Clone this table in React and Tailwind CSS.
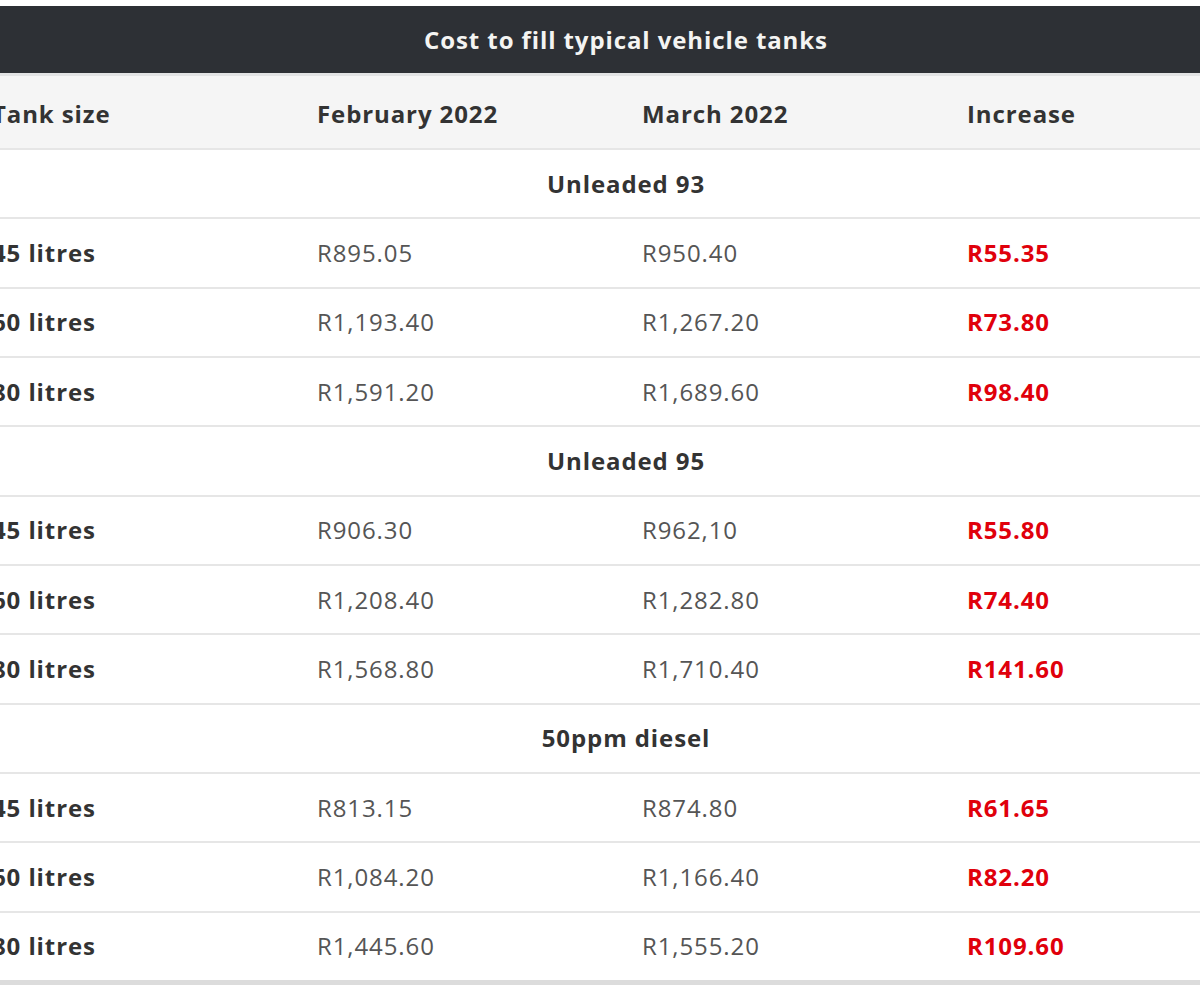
const groups = [
  {
    name: "Unleaded 93",
    rows: [
      ["45 litres", "R895.05", "R950.40", "R55.35"],
      ["60 litres", "R1,193.40", "R1,267.20", "R73.80"],
      ["80 litres", "R1,591.20", "R1,689.60", "R98.40"],
    ],
  },
  {
    name: "Unleaded 95",
    rows: [
      ["45 litres", "R906.30", "R962,10", "R55.80"],
      ["60 litres", "R1,208.40", "R1,282.80", "R74.40"],
      ["80 litres", "R1,568.80", "R1,710.40", "R141.60"],
    ],
  },
  {
    name: "50ppm diesel",
    rows: [
      ["45 litres", "R813.15", "R874.80", "R61.65"],
      ["60 litres", "R1,084.20", "R1,166.40", "R82.20"],
      ["80 litres", "R1,445.60", "R1,555.20", "R109.60"],
    ],
  },
];

const rowClass =
  "grid grid-cols-[325px_325px_325px_325px] items-center h-[69.33px] border-t-2 border-[#e6e6e6]";

const App = () => {
  return (
    <div
      className="w-[1200px] h-[1000px] overflow-hidden bg-white pt-[6px] tracking-[0.9px]"
      style={{ fontFamily: '"Open Sans", "Liberation Sans", sans-serif' }}
    >
      <div className="w-[1300px] -ml-[24px] border-b-[5px] border-[#dcdcdc]">
        {/* title bar */}
        <div className="h-[67px] bg-[#2d3035] flex items-center justify-center text-[#f4f4f2] text-[24px] font-bold">
          Cost to fill typical vehicle tanks
        </div>

        {/* column headings */}
        <div className="grid grid-cols-[325px_325px_325px_325px] items-center h-[75px] pt-[3px] bg-[#f5f5f5] border-t-[3px] border-[#e2e3e4] text-[24px] font-bold text-[#333]">
          <div className="pl-[16px]">Tank size</div>
          <div className="pl-[16px]">February 2022</div>
          <div className="pl-[16px]">March 2022</div>
          <div className="pl-[16px]">Increase</div>
        </div>

        {groups.map((g) => (
          <div key={g.name}>
            <div className={`${rowClass} text-[24px] font-bold text-[#333]`}>
              <div className="col-span-4 text-center">{g.name}</div>
            </div>
            {g.rows.map((r) => (
              <div key={g.name + r[0]} className={`${rowClass} text-[24px]`}>
                <div className="pl-[16px] font-bold text-[#333]">{r[0]}</div>
                <div className="pl-[16px] text-[#555]">{r[1]}</div>
                <div className="pl-[16px] text-[#555]">{r[2]}</div>
                <div className="pl-[16px] font-bold text-[#e0000b]">{r[3]}</div>
              </div>
            ))}
          </div>
        ))}
      </div>
    </div>
  );
};

export default App;
